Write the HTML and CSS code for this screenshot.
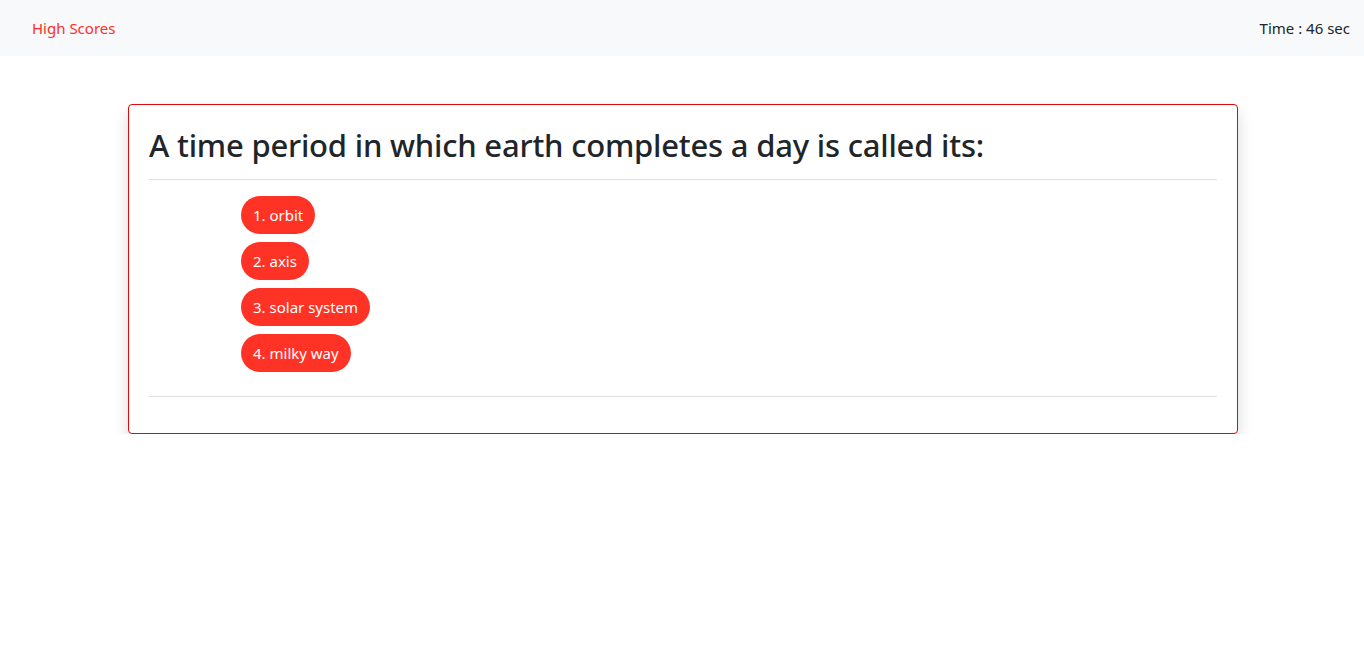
FILE: index.html
```html
<!DOCTYPE html>
<html>
<head>
<meta charset="utf-8">
<link rel="stylesheet" href="styles.css">
</head>
<body>
<nav class="navbar">
  <a class="nav-link" href="#">High Scores</a>
  <span class="timer">Time : 46 sec</span>
</nav>
<main class="container">
  <section class="card">
    <h2 class="question">A time period in which earth completes a day is called its:</h2>
    <hr class="divider">
    <div class="choices">
      <button class="choice">1. orbit</button>
      <button class="choice">2. axis</button>
      <button class="choice">3. solar system</button>
      <button class="choice">4. milky way</button>
    </div>
    <hr class="divider bottom">
  </section>
</main>
</body>
</html>
```
FILE: styles.css
```css
* { box-sizing: border-box; }
body {
  margin: 0;
  font-family: "Segoe UI", "Noto Sans", "Open Sans", sans-serif;
  font-size: 15px;
  line-height: 1.5;
  color: #212529;
  background: #fff;
}
.navbar {
  height: 56px;
  background: #f8f9fa;
  display: flex;
  align-items: center;
  justify-content: space-between;
  padding: 0 14px 0 32px;
}
.nav-link {
  color: #ff2f26;
  text-decoration: none;
}
.timer { color: #212529; }
.container {
  width: 1110px;
  margin: 48px 0 0 calc(50% - 554px);
}
.card {
  border: 1px solid #dd0a0a;
  border-radius: 4px;
  padding: 20px 20px 20px;
  box-shadow: 0 8px 16px rgba(0,0,0,0.15);
  background: #fff;
}
.question {
  margin: 0;
  font-size: 31px;
  letter-spacing: -0.2px;
  font-weight: 500;
  line-height: 38px;
  padding-top: 1px;
}
.divider {
  border: 0;
  border-top: 1px solid #e2e2e2;
  margin: 15px 0 16px;
}
.divider.bottom { margin: 24px 0 16px; }
.choices {
  display: flex;
  flex-direction: column;
  align-items: flex-start;
  gap: 8px;
  padding-left: 92px;
}
.choice {
  font: inherit;
  color: #fff;
  background: #ff3226;
  border: 0;
  border-radius: 19px;
  height: 38px;
  padding: 0 12px;
  line-height: 38px;
}
```
